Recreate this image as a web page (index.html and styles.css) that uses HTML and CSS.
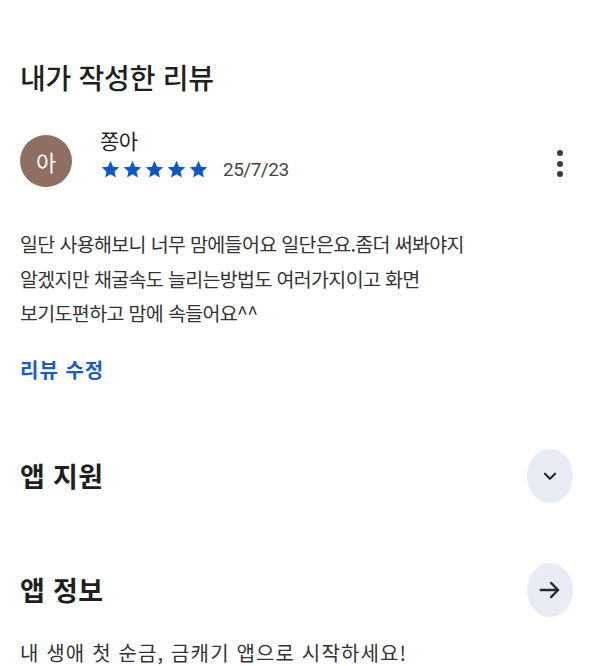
FILE: index.html
```html
<!DOCTYPE html>
<html lang="ko">

<head>
    <meta charset="UTF-8">
    <meta name="viewport" content="width=device-width, initial-scale=1.0">
    <title>내가 작성한 리뷰</title>
    <link rel="stylesheet" href="styles.css">
</head>

<body>
    <div class="page">
        <h2 class="page-title">내가 작성한 리뷰</h2>

        <div class="review-header">
            <div class="avatar">아</div>
            <div class="review-meta">
                <span class="review-name">쫑아</span>
                <div class="review-rating">
                    <div class="stars">
                        <svg viewBox="0 0 24 24" width="21" height="21"><path d="M12 2l2.9 6.9 7.1.6-5.4 4.7 1.6 7-6.2-3.8-6.2 3.8 1.6-7L1.9 9.5l7.2-.6z"/></svg>
                        <svg viewBox="0 0 24 24" width="21" height="21"><path d="M12 2l2.9 6.9 7.1.6-5.4 4.7 1.6 7-6.2-3.8-6.2 3.8 1.6-7L1.9 9.5l7.2-.6z"/></svg>
                        <svg viewBox="0 0 24 24" width="21" height="21"><path d="M12 2l2.9 6.9 7.1.6-5.4 4.7 1.6 7-6.2-3.8-6.2 3.8 1.6-7L1.9 9.5l7.2-.6z"/></svg>
                        <svg viewBox="0 0 24 24" width="21" height="21"><path d="M12 2l2.9 6.9 7.1.6-5.4 4.7 1.6 7-6.2-3.8-6.2 3.8 1.6-7L1.9 9.5l7.2-.6z"/></svg>
                        <svg viewBox="0 0 24 24" width="21" height="21"><path d="M12 2l2.9 6.9 7.1.6-5.4 4.7 1.6 7-6.2-3.8-6.2 3.8 1.6-7L1.9 9.5l7.2-.6z"/></svg>
                    </div>
                    <span class="review-date">25/7/23</span>
                </div>
            </div>
            <div class="more-btn">
                <span class="dot"></span>
                <span class="dot"></span>
                <span class="dot"></span>
            </div>
        </div>

        <p class="review-text">일단 사용해보니 너무 맘에들어요 일단은요.좀더 써봐야지<br>알겠지만 채굴속도 늘리는방법도 여러가지이고 화면<br>보기도편하고 맘에 속들어요^^</p>

        <a class="edit-link" href="#">리뷰 수정</a>

        <div class="section-row section-support">
            <h3 class="section-title">앱 지원</h3>
            <div class="round-btn">
                <svg viewBox="0 0 24 24" width="22" height="22"><path d="M6.5 9.5l5.5 5.5 5.5-5.5" fill="none" stroke="#2b2b2b" stroke-width="2.4" stroke-linecap="round" stroke-linejoin="round"/></svg>
            </div>
        </div>

        <div class="section-row section-info">
            <h3 class="section-title">앱 정보</h3>
            <div class="round-btn">
                <svg viewBox="0 0 24 24" width="26" height="26"><path d="M3.5 12h16M13 5.5l6.5 6.5-6.5 6.5" fill="none" stroke="#2b2b2b" stroke-width="2.2" stroke-linecap="round" stroke-linejoin="round"/></svg>
            </div>
        </div>

        <p class="app-desc">내 생애 첫 순금, 금캐기 앱으로 시작하세요!</p>
    </div>
</body>

</html>
```

FILE: styles.css
```css
        /* Page */
        body {
            margin: 0;
            background-color: #ffffff;
            font-family: "Noto Sans CJK KR", "Noto Sans", sans-serif;
            color: #1f1f1f;
        }

        .page {
            padding: 58px 20px 0 20px;
            display: flex;
            flex-direction: column;
        }

        .page-title {
            margin: 0;
            font-size: 28px;
            font-weight: 500;
            line-height: 38px;
            letter-spacing: -0.25px;
        }

        /* Review header */
        .review-header {
            display: flex;
            align-items: flex-start;
            margin-top: 22px;
        }

        .avatar {
            width: 52px;
            height: 52px;
            border-radius: 50%;
            background-color: #8e6f62;
            color: white;
            display: flex;
            align-items: center;
            justify-content: center;
            font-size: 22px;
            margin-top: 17px;
            flex-shrink: 0;
        }

        .review-meta {
            display: flex;
            flex-direction: column;
            margin-left: 28px;
            margin-top: 8px;
            flex: 1;
        }

        .review-name {
            font-size: 21px;
            line-height: 28px;
            letter-spacing: -0.5px;
        }

        .review-rating {
            display: flex;
            align-items: center;
            margin-top: 4px;
        }

        .stars {
            display: flex;
            gap: 1px;
            fill: #0b57d0;
        }

        .review-date {
            font-family: Roboto, "Noto Sans", sans-serif;
            font-size: 19px;
            color: #444746;
            margin-left: 14px;
            letter-spacing: -0.5px;
        }

        .more-btn {
            display: flex;
            flex-direction: column;
            align-items: center;
            gap: 4.5px;
            margin-top: 32px;
            margin-right: 17px;
        }

        .dot {
            width: 6px;
            height: 6px;
            border-radius: 50%;
            background-color: #3c3c3c;
        }

        /* Review body */
        .review-text {
            margin: 40px 0 0 0;
            font-size: 19.5px;
            line-height: 34.6px;
            letter-spacing: -0.65px;
            color: #333333;
        }

        .edit-link {
            margin-top: 24px;
            font-size: 20px;
            font-weight: 700;
            line-height: 30px;
            letter-spacing: 1px;
            color: #1c5cbf;
            text-decoration: none;
            align-self: flex-start;
        }

        /* Sections */
        .section-row {
            display: flex;
            align-items: center;
            justify-content: space-between;
        }

        .section-support {
            margin-top: 64px;
        }

        .section-info {
            margin-top: 60px;
        }

        .section-title {
            margin: 0;
            font-size: 27px;
            font-weight: 700;
            letter-spacing: 0.3px;
            line-height: 36px;
        }

        .round-btn {
            width: 46px;
            height: 54px;
            border-radius: 50%;
            background-color: #e9ebf5;
            display: flex;
            align-items: center;
            justify-content: center;
            margin-right: 7px;
        }

        .app-desc {
            margin: 21px 0 0 0;
            font-size: 20px;
            line-height: 30px;
            letter-spacing: 1.15px;
            color: #333333;
        }
```
